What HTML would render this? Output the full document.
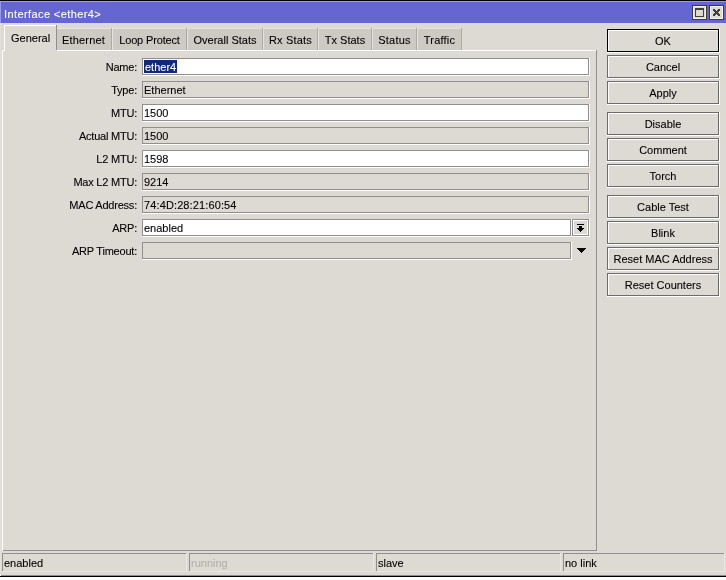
<!DOCTYPE html>
<html><head><meta charset="utf-8"><style>
html,body{margin:0;padding:0;}
body{width:726px;height:580px;position:relative;overflow:hidden;background:#fff;font-family:"Liberation Sans",sans-serif;font-size:11px;}
div{position:absolute;}
.t{line-height:13px;white-space:nowrap;will-change:transform;-webkit-text-stroke:0.1px currentColor;}
</style></head><body>
<div style="left:0px;top:0px;width:726px;height:580px;background:#ffffff;"></div>
<div style="left:0px;top:0px;width:726px;height:577px;background:#ddd9d3;"></div>
<div style="left:0px;top:0px;width:726px;height:1px;background:#000;"></div>
<div style="left:0px;top:576px;width:726px;height:1px;background:#000;"></div>
<div style="left:0px;top:575px;width:726px;height:1px;background:#8f8f8f;"></div>
<div style="left:0px;top:23px;width:1px;height:552px;background:#e4e1dc;"></div>
<div style="left:0px;top:575px;width:1px;height:1px;background:#ffffff;"></div>
<div style="left:0px;top:1px;width:726px;height:22px;background:#6666d2;"></div>
<div style="left:0px;top:1px;width:726px;height:1px;background:#9b9beb;"></div>
<div style="left:0px;top:1px;width:1px;height:22px;background:#9b9beb;"></div>
<div style="left:1px;top:23px;width:725px;height:1px;background:#ddd9d3;"></div>
<div class="t" style="left:4px;top:8px;color:#fff;letter-spacing:0.4px">Interface &lt;ether4&gt;</div>
<div style="left:692px;top:5px;width:15px;height:15px;background:#3c3c34;"></div>
<div style="left:693px;top:6px;width:13px;height:13px;background:#f4f2ee;"></div>
<div style="left:694px;top:7px;width:11px;height:11px;background:#ddd9d3;"></div>
<div style="left:709px;top:5px;width:15px;height:15px;background:#3c3c34;"></div>
<div style="left:710px;top:6px;width:13px;height:13px;background:#f4f2ee;"></div>
<div style="left:711px;top:7px;width:11px;height:11px;background:#ddd9d3;"></div>
<div style="left:695px;top:8px;width:9px;height:9px;background:#404040;"></div>
<div style="left:696px;top:10px;width:7px;height:6px;background:#ddd9d3;"></div>
<svg style="position:absolute;left:713px;top:9px" width="7" height="7" shape-rendering="crispEdges" fill="#3c3c3c"><rect x="0" y="0" width="1" height="1"/><rect x="1" y="0" width="1" height="1"/><rect x="5" y="0" width="1" height="1"/><rect x="6" y="0" width="1" height="1"/><rect x="0" y="1" width="1" height="1"/><rect x="1" y="1" width="1" height="1"/><rect x="2" y="1" width="1" height="1"/><rect x="4" y="1" width="1" height="1"/><rect x="5" y="1" width="1" height="1"/><rect x="6" y="1" width="1" height="1"/><rect x="1" y="2" width="1" height="1"/><rect x="2" y="2" width="1" height="1"/><rect x="3" y="2" width="1" height="1"/><rect x="4" y="2" width="1" height="1"/><rect x="5" y="2" width="1" height="1"/><rect x="2" y="3" width="1" height="1"/><rect x="3" y="3" width="1" height="1"/><rect x="4" y="3" width="1" height="1"/><rect x="1" y="4" width="1" height="1"/><rect x="2" y="4" width="1" height="1"/><rect x="3" y="4" width="1" height="1"/><rect x="4" y="4" width="1" height="1"/><rect x="5" y="4" width="1" height="1"/><rect x="0" y="5" width="1" height="1"/><rect x="1" y="5" width="1" height="1"/><rect x="2" y="5" width="1" height="1"/><rect x="4" y="5" width="1" height="1"/><rect x="5" y="5" width="1" height="1"/><rect x="6" y="5" width="1" height="1"/><rect x="0" y="6" width="1" height="1"/><rect x="1" y="6" width="1" height="1"/><rect x="5" y="6" width="1" height="1"/><rect x="6" y="6" width="1" height="1"/></svg>
<div style="left:57px;top:28px;width:55px;height:22px;background:#cdcac4;"></div>
<div style="left:57px;top:28px;width:54px;height:1px;background:#e6e3de;"></div>
<div style="left:111px;top:28px;width:1px;height:22px;background:#adaaa4;"></div>
<div class="t" style="left:57px;top:34px;width:53px;text-align:center;color:#000;letter-spacing:0.2px">Ethernet</div>
<div style="left:112px;top:28px;width:75px;height:22px;background:#cdcac4;"></div>
<div style="left:112px;top:28px;width:74px;height:1px;background:#e6e3de;"></div>
<div style="left:112px;top:28px;width:1px;height:22px;background:#e6e3de;"></div>
<div style="left:186px;top:28px;width:1px;height:22px;background:#adaaa4;"></div>
<div class="t" style="left:113px;top:34px;width:73px;text-align:center;color:#000;letter-spacing:-0.15px">Loop Protect</div>
<div style="left:187px;top:28px;width:76px;height:22px;background:#cdcac4;"></div>
<div style="left:187px;top:28px;width:75px;height:1px;background:#e6e3de;"></div>
<div style="left:187px;top:28px;width:1px;height:22px;background:#e6e3de;"></div>
<div style="left:262px;top:28px;width:1px;height:22px;background:#adaaa4;"></div>
<div class="t" style="left:188px;top:34px;width:74px;text-align:center;color:#000;letter-spacing:0px">Overall Stats</div>
<div style="left:263px;top:28px;width:55px;height:22px;background:#cdcac4;"></div>
<div style="left:263px;top:28px;width:54px;height:1px;background:#e6e3de;"></div>
<div style="left:263px;top:28px;width:1px;height:22px;background:#e6e3de;"></div>
<div style="left:317px;top:28px;width:1px;height:22px;background:#adaaa4;"></div>
<div class="t" style="left:264px;top:34px;width:53px;text-align:center;color:#000;letter-spacing:0.2px">Rx Stats</div>
<div style="left:318px;top:28px;width:54px;height:22px;background:#cdcac4;"></div>
<div style="left:318px;top:28px;width:53px;height:1px;background:#e6e3de;"></div>
<div style="left:318px;top:28px;width:1px;height:22px;background:#e6e3de;"></div>
<div style="left:371px;top:28px;width:1px;height:22px;background:#adaaa4;"></div>
<div class="t" style="left:319px;top:34px;width:52px;text-align:center;color:#000;letter-spacing:0px">Tx Stats</div>
<div style="left:372px;top:28px;width:45px;height:22px;background:#cdcac4;"></div>
<div style="left:372px;top:28px;width:44px;height:1px;background:#e6e3de;"></div>
<div style="left:372px;top:28px;width:1px;height:22px;background:#e6e3de;"></div>
<div style="left:416px;top:28px;width:1px;height:22px;background:#adaaa4;"></div>
<div class="t" style="left:373px;top:34px;width:43px;text-align:center;color:#000;letter-spacing:0.2px">Status</div>
<div style="left:417px;top:28px;width:45px;height:22px;background:#cdcac4;"></div>
<div style="left:417px;top:28px;width:44px;height:1px;background:#e6e3de;"></div>
<div style="left:417px;top:28px;width:1px;height:22px;background:#e6e3de;"></div>
<div style="left:461px;top:28px;width:1px;height:22px;background:#adaaa4;"></div>
<div class="t" style="left:418px;top:34px;width:43px;text-align:center;color:#000;letter-spacing:0.2px">Traffic</div>
<div style="left:2px;top:50px;width:595px;height:501px;background:#ddd9d3;"></div>
<div style="left:2px;top:50px;width:594px;height:1px;background:#ffffff;"></div>
<div style="left:3px;top:550px;width:594px;height:1px;background:#8f8f8f;"></div>
<div style="left:2px;top:50px;width:1px;height:501px;background:#ffffff;"></div>
<div style="left:596px;top:50px;width:1px;height:501px;background:#8f8f8f;"></div>
<div style="left:4px;top:25px;width:53px;height:26px;background:#ddd9d3;"></div>
<div style="left:4px;top:25px;width:52px;height:1px;background:#ffffff;"></div>
<div style="left:4px;top:25px;width:1px;height:26px;background:#ffffff;"></div>
<div style="left:56px;top:25px;width:1px;height:25px;background:#8f8f8f;"></div>
<div style="left:2px;top:50px;width:3px;height:1px;background:#ffffff;"></div>
<div class="t" style="left:11px;top:32px;color:#000;">General</div>
<div class="t" style="left:-163px;top:61px;width:300px;text-align:right;color:#000;letter-spacing:-0.22px">Name:</div>
<div style="left:142px;top:58px;width:447px;height:17px;background:#8f8f8f;"></div>
<div style="left:589px;top:58px;width:1px;height:18px;background:#ffffff;"></div>
<div style="left:142px;top:75px;width:448px;height:1px;background:#ffffff;"></div>
<div style="left:143px;top:59px;width:445px;height:15px;background:#ffffff;"></div>
<div style="left:144px;top:60px;width:33px;height:13px;background:#0f2a78;"></div>
<div class="t" style="left:145px;top:61px;color:#fff;">ether4</div>
<div class="t" style="left:-163px;top:84px;width:300px;text-align:right;color:#000;letter-spacing:-0.22px">Type:</div>
<div style="left:142px;top:81px;width:447px;height:17px;background:#8f8f8f;"></div>
<div style="left:589px;top:81px;width:1px;height:18px;background:#ffffff;"></div>
<div style="left:142px;top:98px;width:448px;height:1px;background:#ffffff;"></div>
<div style="left:143px;top:82px;width:445px;height:15px;background:#ddd9d3;"></div>
<div class="t" style="left:144px;top:84px;color:#000;">Ethernet</div>
<div class="t" style="left:-163px;top:107px;width:300px;text-align:right;color:#000;letter-spacing:-0.22px">MTU:</div>
<div style="left:142px;top:104px;width:447px;height:17px;background:#8f8f8f;"></div>
<div style="left:589px;top:104px;width:1px;height:18px;background:#ffffff;"></div>
<div style="left:142px;top:121px;width:448px;height:1px;background:#ffffff;"></div>
<div style="left:143px;top:105px;width:445px;height:15px;background:#ffffff;"></div>
<div class="t" style="left:144px;top:107px;color:#000;">1500</div>
<div class="t" style="left:-163px;top:130px;width:300px;text-align:right;color:#000;letter-spacing:-0.22px">Actual MTU:</div>
<div style="left:142px;top:127px;width:447px;height:17px;background:#8f8f8f;"></div>
<div style="left:589px;top:127px;width:1px;height:18px;background:#ffffff;"></div>
<div style="left:142px;top:144px;width:448px;height:1px;background:#ffffff;"></div>
<div style="left:143px;top:128px;width:445px;height:15px;background:#ddd9d3;"></div>
<div class="t" style="left:144px;top:130px;color:#000;">1500</div>
<div class="t" style="left:-163px;top:153px;width:300px;text-align:right;color:#000;letter-spacing:-0.22px">L2 MTU:</div>
<div style="left:142px;top:150px;width:447px;height:17px;background:#8f8f8f;"></div>
<div style="left:589px;top:150px;width:1px;height:18px;background:#ffffff;"></div>
<div style="left:142px;top:167px;width:448px;height:1px;background:#ffffff;"></div>
<div style="left:143px;top:151px;width:445px;height:15px;background:#ffffff;"></div>
<div class="t" style="left:144px;top:153px;color:#000;">1598</div>
<div class="t" style="left:-163px;top:176px;width:300px;text-align:right;color:#000;letter-spacing:-0.22px">Max L2 MTU:</div>
<div style="left:142px;top:173px;width:447px;height:17px;background:#8f8f8f;"></div>
<div style="left:589px;top:173px;width:1px;height:18px;background:#ffffff;"></div>
<div style="left:142px;top:190px;width:448px;height:1px;background:#ffffff;"></div>
<div style="left:143px;top:174px;width:445px;height:15px;background:#ddd9d3;"></div>
<div class="t" style="left:144px;top:176px;color:#000;">9214</div>
<div class="t" style="left:-163px;top:199px;width:300px;text-align:right;color:#000;letter-spacing:-0.22px">MAC Address:</div>
<div style="left:142px;top:196px;width:447px;height:17px;background:#8f8f8f;"></div>
<div style="left:589px;top:196px;width:1px;height:18px;background:#ffffff;"></div>
<div style="left:142px;top:213px;width:448px;height:1px;background:#ffffff;"></div>
<div style="left:143px;top:197px;width:445px;height:15px;background:#ddd9d3;"></div>
<div class="t" style="left:144px;top:199px;color:#000;letter-spacing:0.12px">74:4D:28:21:60:54</div>
<div class="t" style="left:-163px;top:222px;width:300px;text-align:right;color:#000;letter-spacing:-0.22px">ARP:</div>
<div style="left:142px;top:219px;width:429px;height:17px;background:#8f8f8f;"></div>
<div style="left:571px;top:219px;width:1px;height:18px;background:#ffffff;"></div>
<div style="left:142px;top:236px;width:430px;height:1px;background:#ffffff;"></div>
<div style="left:143px;top:220px;width:427px;height:15px;background:#ffffff;"></div>
<div class="t" style="left:144px;top:222px;color:#000;">enabled</div>
<div class="t" style="left:-163px;top:245px;width:300px;text-align:right;color:#000;letter-spacing:-0.22px">ARP Timeout:</div>
<div style="left:142px;top:242px;width:429px;height:17px;background:#8f8f8f;"></div>
<div style="left:571px;top:242px;width:1px;height:18px;background:#ffffff;"></div>
<div style="left:142px;top:259px;width:430px;height:1px;background:#ffffff;"></div>
<div style="left:143px;top:243px;width:427px;height:15px;background:#ddd9d3;"></div>
<div style="left:572px;top:219px;width:17px;height:17px;background:#8f8f8f;"></div>
<div style="left:589px;top:219px;width:1px;height:18px;background:#ffffff;"></div>
<div style="left:572px;top:236px;width:18px;height:1px;background:#ffffff;"></div>
<div style="left:573px;top:220px;width:15px;height:15px;background:#ffffff;"></div>
<div style="left:574px;top:221px;width:13px;height:13px;background:#ddd9d3;"></div>
<div style="left:577px;top:224px;width:7px;height:1px;background:#000;"></div>
<div style="left:579px;top:226px;width:3px;height:2px;background:#000;"></div>
<div style="left:577px;top:228px;width:7px;height:1px;background:#000;"></div>
<div style="left:578px;top:229px;width:5px;height:1px;background:#000;"></div>
<div style="left:579px;top:230px;width:3px;height:1px;background:#000;"></div>
<div style="left:580px;top:231px;width:1px;height:1px;background:#000;"></div>
<div style="left:577px;top:248px;width:9px;height:1px;background:#000;"></div>
<div style="left:578px;top:249px;width:7px;height:1px;background:#000;"></div>
<div style="left:579px;top:250px;width:5px;height:1px;background:#000;"></div>
<div style="left:580px;top:251px;width:3px;height:1px;background:#000;"></div>
<div style="left:581px;top:252px;width:1px;height:1px;background:#000;"></div>
<div style="left:607px;top:29px;width:112px;height:23px;background:#000;"></div>
<div style="left:719px;top:29px;width:1px;height:24px;background:#ffffff;"></div>
<div style="left:607px;top:52px;width:113px;height:1px;background:#ffffff;"></div>
<div style="left:608px;top:30px;width:110px;height:21px;background:#ffffff;"></div>
<div style="left:609px;top:31px;width:109px;height:20px;background:#ddd9d3;"></div>
<div class="t" style="left:608px;top:35px;width:110px;text-align:center;color:#000;">OK</div>
<div style="left:607px;top:55px;width:112px;height:23px;background:#6b6b6b;"></div>
<div style="left:719px;top:55px;width:1px;height:24px;background:#ffffff;"></div>
<div style="left:607px;top:78px;width:113px;height:1px;background:#ffffff;"></div>
<div style="left:608px;top:56px;width:110px;height:21px;background:#ffffff;"></div>
<div style="left:609px;top:57px;width:109px;height:20px;background:#ddd9d3;"></div>
<div class="t" style="left:608px;top:61px;width:110px;text-align:center;color:#000;">Cancel</div>
<div style="left:607px;top:81px;width:112px;height:23px;background:#6b6b6b;"></div>
<div style="left:719px;top:81px;width:1px;height:24px;background:#ffffff;"></div>
<div style="left:607px;top:104px;width:113px;height:1px;background:#ffffff;"></div>
<div style="left:608px;top:82px;width:110px;height:21px;background:#ffffff;"></div>
<div style="left:609px;top:83px;width:109px;height:20px;background:#ddd9d3;"></div>
<div class="t" style="left:608px;top:87px;width:110px;text-align:center;color:#000;">Apply</div>
<div style="left:607px;top:112px;width:112px;height:23px;background:#6b6b6b;"></div>
<div style="left:719px;top:112px;width:1px;height:24px;background:#ffffff;"></div>
<div style="left:607px;top:135px;width:113px;height:1px;background:#ffffff;"></div>
<div style="left:608px;top:113px;width:110px;height:21px;background:#ffffff;"></div>
<div style="left:609px;top:114px;width:109px;height:20px;background:#ddd9d3;"></div>
<div class="t" style="left:608px;top:118px;width:110px;text-align:center;color:#000;">Disable</div>
<div style="left:607px;top:138px;width:112px;height:23px;background:#6b6b6b;"></div>
<div style="left:719px;top:138px;width:1px;height:24px;background:#ffffff;"></div>
<div style="left:607px;top:161px;width:113px;height:1px;background:#ffffff;"></div>
<div style="left:608px;top:139px;width:110px;height:21px;background:#ffffff;"></div>
<div style="left:609px;top:140px;width:109px;height:20px;background:#ddd9d3;"></div>
<div class="t" style="left:608px;top:144px;width:110px;text-align:center;color:#000;">Comment</div>
<div style="left:607px;top:164px;width:112px;height:23px;background:#6b6b6b;"></div>
<div style="left:719px;top:164px;width:1px;height:24px;background:#ffffff;"></div>
<div style="left:607px;top:187px;width:113px;height:1px;background:#ffffff;"></div>
<div style="left:608px;top:165px;width:110px;height:21px;background:#ffffff;"></div>
<div style="left:609px;top:166px;width:109px;height:20px;background:#ddd9d3;"></div>
<div class="t" style="left:608px;top:170px;width:110px;text-align:center;color:#000;">Torch</div>
<div style="left:607px;top:195px;width:112px;height:23px;background:#6b6b6b;"></div>
<div style="left:719px;top:195px;width:1px;height:24px;background:#ffffff;"></div>
<div style="left:607px;top:218px;width:113px;height:1px;background:#ffffff;"></div>
<div style="left:608px;top:196px;width:110px;height:21px;background:#ffffff;"></div>
<div style="left:609px;top:197px;width:109px;height:20px;background:#ddd9d3;"></div>
<div class="t" style="left:608px;top:201px;width:110px;text-align:center;color:#000;">Cable Test</div>
<div style="left:607px;top:221px;width:112px;height:23px;background:#6b6b6b;"></div>
<div style="left:719px;top:221px;width:1px;height:24px;background:#ffffff;"></div>
<div style="left:607px;top:244px;width:113px;height:1px;background:#ffffff;"></div>
<div style="left:608px;top:222px;width:110px;height:21px;background:#ffffff;"></div>
<div style="left:609px;top:223px;width:109px;height:20px;background:#ddd9d3;"></div>
<div class="t" style="left:608px;top:227px;width:110px;text-align:center;color:#000;">Blink</div>
<div style="left:607px;top:247px;width:112px;height:23px;background:#6b6b6b;"></div>
<div style="left:719px;top:247px;width:1px;height:24px;background:#ffffff;"></div>
<div style="left:607px;top:270px;width:113px;height:1px;background:#ffffff;"></div>
<div style="left:608px;top:248px;width:110px;height:21px;background:#ffffff;"></div>
<div style="left:609px;top:249px;width:109px;height:20px;background:#ddd9d3;"></div>
<div class="t" style="left:608px;top:253px;width:110px;text-align:center;color:#000;">Reset MAC Address</div>
<div style="left:607px;top:273px;width:112px;height:23px;background:#6b6b6b;"></div>
<div style="left:719px;top:273px;width:1px;height:24px;background:#ffffff;"></div>
<div style="left:607px;top:296px;width:113px;height:1px;background:#ffffff;"></div>
<div style="left:608px;top:274px;width:110px;height:21px;background:#ffffff;"></div>
<div style="left:609px;top:275px;width:109px;height:20px;background:#ddd9d3;"></div>
<div class="t" style="left:608px;top:279px;width:110px;text-align:center;color:#000;">Reset Counters</div>
<div style="left:2px;top:553px;width:185px;height:19px;background:#e9e7e3;"></div>
<div style="left:2px;top:553px;width:184px;height:18px;background:#8f8f8f;"></div>
<div style="left:3px;top:554px;width:183px;height:17px;background:#ddd9d3;"></div>
<div class="t" style="left:4px;top:557px;color:#000;">enabled</div>
<div style="left:189px;top:553px;width:185px;height:19px;background:#e9e7e3;"></div>
<div style="left:189px;top:553px;width:184px;height:18px;background:#8f8f8f;"></div>
<div style="left:190px;top:554px;width:183px;height:17px;background:#ddd9d3;"></div>
<div class="t" style="left:191px;top:557px;color:#b4b1ab;">running</div>
<div style="left:376px;top:553px;width:185px;height:19px;background:#e9e7e3;"></div>
<div style="left:376px;top:553px;width:184px;height:18px;background:#8f8f8f;"></div>
<div style="left:377px;top:554px;width:183px;height:17px;background:#ddd9d3;"></div>
<div class="t" style="left:378px;top:557px;color:#000;">slave</div>
<div style="left:563px;top:553px;width:162px;height:19px;background:#e9e7e3;"></div>
<div style="left:563px;top:553px;width:161px;height:18px;background:#8f8f8f;"></div>
<div style="left:564px;top:554px;width:160px;height:17px;background:#ddd9d3;"></div>
<div class="t" style="left:565px;top:557px;color:#000;">no link</div>
</body></html>
